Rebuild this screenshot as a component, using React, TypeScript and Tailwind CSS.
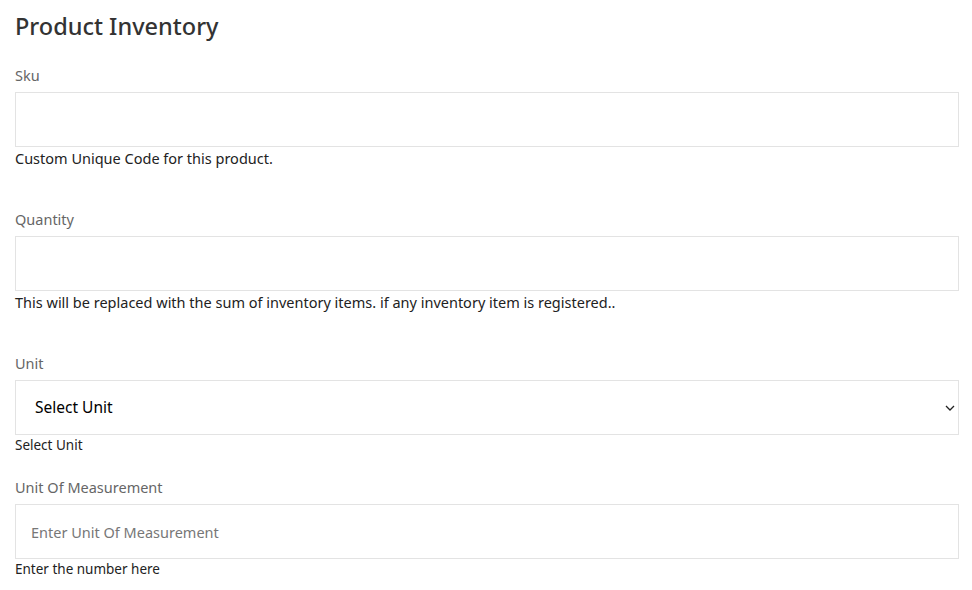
import React from 'react';

interface Field {
    label: string;
    kind: 'input' | 'select';
    placeholder?: string;
    help: string;
    helpSmall?: boolean;
    spacing: string;
}

const fields: Field[] = [
    { label: 'Sku', kind: 'input', help: 'Custom Unique Code for this product.', spacing: 'mb-[39px]' },
    {
        label: 'Quantity',
        kind: 'input',
        help: 'This will be replaced with the sum of inventory items. if any inventory item is registered..',
        spacing: 'mb-[39px]',
    },
    { label: 'Unit', kind: 'select', help: 'Select Unit', helpSmall: true, spacing: 'mb-[21px]' },
    {
        label: 'Unit Of Measurement',
        kind: 'input',
        placeholder: 'Enter Unit Of Measurement',
        help: 'Enter the number here',
        helpSmall: true,
        spacing: '',
    },
];

export default function App() {
    return (
        <div
            className="min-h-screen bg-white px-[15px] pt-[10px] text-[#333]"
            style={{ fontFamily: '"Noto Sans", "Open Sans", sans-serif' }}
        >
            {/* Header */}
            <h2 className="text-[23.5px] font-medium leading-[32px] text-[#333] mb-[22px]">Product Inventory</h2>

            {fields.map((field) => (
                <div key={field.label} className={`w-[944px] ${field.spacing}`}>
                    <label className="block text-[14.5px] leading-[22px] text-[#666] mb-[6px]">{field.label}</label>
                    {field.kind === 'input' ? (
                        <input
                            type="text"
                            placeholder={field.placeholder}
                            className="block w-full h-[55px] border border-[#e3e3e3] bg-white px-[15px] text-[14.5px] text-[#333] placeholder:text-[#777] outline-none"
                        />
                    ) : (
                        <div className="relative h-[55px] w-full border border-[#e3e3e3] bg-white">
                            <select className="h-full w-full appearance-none bg-transparent pl-[19px] text-[15.5px] font-normal text-black outline-none">
                                <option>Select Unit</option>
                            </select>
                            <svg
                                viewBox="0 0 10 6"
                                className="pointer-events-none absolute right-[3px] top-[24px] h-[6px] w-[10px]"
                            >
                                <path d="M1 1l4 4 4-4" fill="none" stroke="#222" strokeWidth="1.3" />
                            </svg>
                        </div>
                    )}
                    <p
                        className={
                            field.helpSmall
                                ? 'text-[13.5px] leading-[20px] text-[#222]'
                                : 'text-[14.5px] leading-[22px] text-[#222]'
                        }
                    >
                        {field.help}
                    </p>
                </div>
            ))}
        </div>
    );
}
